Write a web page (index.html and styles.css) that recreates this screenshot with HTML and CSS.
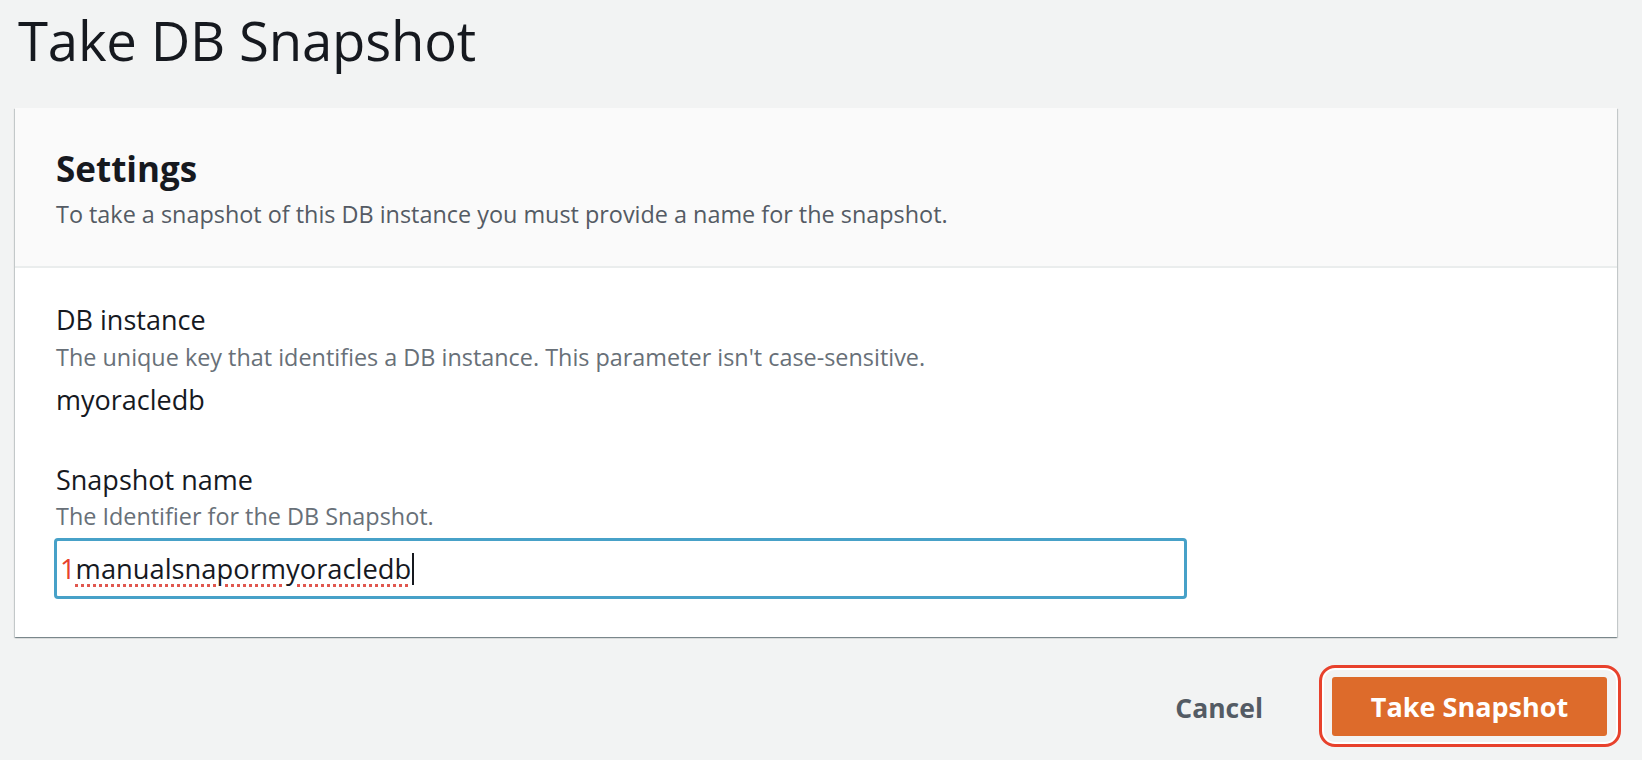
FILE: index.html
```html
<!DOCTYPE html>
<html lang="en">
<head>
<meta charset="utf-8">
<title>Take DB Snapshot</title>
<link rel="stylesheet" href="styles.css">
</head>
<body>
<main class="page">
  <h1 class="page-title">Take DB Snapshot</h1>
  <section class="card">
    <header class="card-header">
      <h2 class="card-title">Settings</h2>
      <p class="card-desc">To take a snapshot of this DB instance you must provide a name for the snapshot.</p>
    </header>
    <div class="card-body">
      <div class="field">
        <div class="field-label">DB instance</div>
        <div class="field-desc">The unique key that identifies a DB instance. This parameter isn't case-sensitive.</div>
        <div class="field-value">myoracledb</div>
      </div>
      <div class="field field-second">
        <div class="field-label">Snapshot name</div>
        <div class="field-desc">The Identifier for the DB Snapshot.</div>
        <div class="input"><span class="input-text"><span class="annot">1</span><span class="spell">manualsnapormyoracledb</span></span><span class="caret"></span></div>
      </div>
    </div>
  </section>
  <div class="actions">
    <button class="btn-link" type="button">Cancel</button>
    <div class="highlight">
      <button class="btn-primary" type="button">Take Snapshot</button>
    </div>
  </div>
</main>
</body>
</html>
```

FILE: styles.css
```css
html, body {
  margin: 0;
  padding: 0;
  background: #f2f3f3;
}
body {
  font-family: "Open Sans", "Noto Sans", sans-serif;
  color: #16191f;
}
.page {
  padding: 0 25px 0 15px;
}
.page-title {
  margin: 0;
  padding: 4px 0 0 3px;
  font-size: 54.5px;
  font-weight: 400;
  line-height: 72px;
  letter-spacing: -0.2px;
  color: #16191f;
}
.card {
  margin-top: 32px;
  background: #fff;
  box-shadow: 0 1px 1px 0 rgba(0,28,36,.3), 1px 1px 1px 0 rgba(0,28,36,.15), -1px 1px 1px 0 rgba(0,28,36,.15);
}
.card-header {
  background: #fafafa;
  border-bottom: 2px solid #eaeded;
  padding: 40px 41px 37px;
}
.card-title {
  margin: 0;
  font-size: 35px;
  font-weight: 700;
  line-height: 42px;
}
.card-desc {
  margin: 9px 0 0;
  font-size: 23.4px;
  line-height: 30px;
  color: #545b64;
}
.card-body {
  padding: 34px 41px 38px 39px;
}
.field-label {
  font-size: 27px;
  line-height: 36px;
  padding-left: 2px;
}
.field-desc {
  font-size: 23.4px;
  line-height: 30px;
  color: #687078;
  margin-top: 4px;
  padding-left: 2px;
}
.field-value {
  font-size: 27px;
  line-height: 36px;
  margin-top: 10px;
  padding-left: 2px;
}
.field-second {
  margin-top: 44px;
}
.field-second .field-desc {
  margin-top: 3px;
}
.input {
  margin-top: 7px;
  width: 1133px;
  height: 61px;
  box-sizing: border-box;
  border: 3px solid #47a1c8;
  border-radius: 4px;
  display: flex;
  align-items: center;
  padding-left: 3px;
  background: #fff;
}
.input-text {
  font-size: 27.3px;
  line-height: 36px;
  color: #16191f;
}
.annot {
  color: #e8412c;
}
.spell {
  text-decoration: underline dotted #e0574f;
  text-decoration-thickness: 3px;
  text-underline-offset: 5px;
}
.caret {
  width: 2px;
  height: 32px;
  background: #16191f;
  margin-left: 1px;
}
.actions {
  display: flex;
  justify-content: flex-end;
  align-items: center;
  margin-top: 28px;
  gap: 56px;
}
.btn-link {
  background: none;
  border: 0;
  font-family: inherit;
  font-size: 26.5px;
  font-weight: 700;
  color: #545b64;
  padding: 0;
  margin-top: 4px;
}
.highlight {
  border: 3px solid #e8412c;
  border-radius: 16px;
  padding: 9px 11px 8px 10px;
  box-shadow: inset 0 0 0 2px #fff;
  margin-right: -4px;
}
.btn-primary {
  display: block;
  width: 275px;
  height: 59px;
  background: #dd6b2b;
  border: 0;
  border-radius: 3px;
  color: #fff;
  font-family: inherit;
  font-size: 27px;
  font-weight: 700;
  padding: 0;
}
```
